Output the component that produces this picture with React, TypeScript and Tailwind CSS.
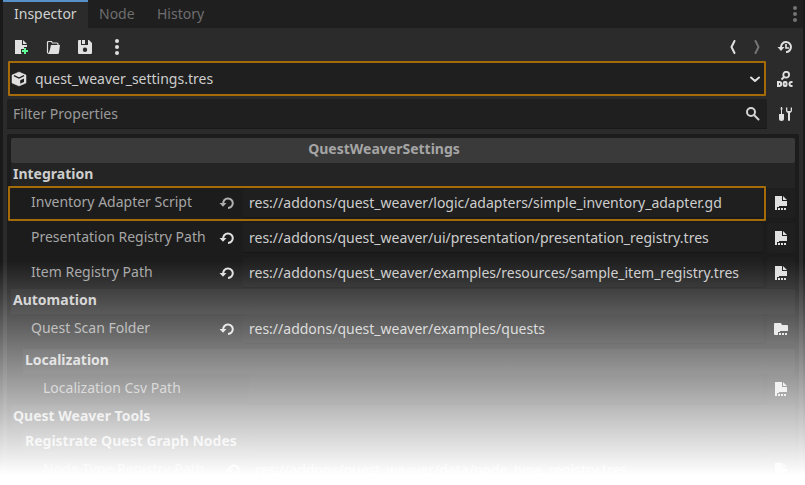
import type { ReactNode } from "react";

function Icon({ children, className = "" }: { children: ReactNode; className?: string }) {
  return (
    <svg width="16" height="16" viewBox="0 0 16 16" fill="none" className={`block shrink-0 ${className}`}>
      {children}
    </svg>
  );
}

const LIGHT = "#e0e0e0";

const NewIcon = () => (
  <Icon>
    <path d="M2 1h7v5h5v2h-3v2H8v4l1 1H2z" fill={LIGHT} />
    <path d="M10 1v4h4z" fill={LIGHT} />
    <path d="M11 9h2v2h2v2h-2v2h-2v-2H9v-2h2z" fill="#5fff97" />
  </Icon>
);
const OpenIcon = () => (
  <Icon>
    <path d="M2.500 14V3.500q0-1 1-1H6.500l1 1.500h4.500q1 0 1 1V6" stroke={LIGHT} strokeWidth="1.200" />
    <path d="M6 6h9l-1 7.500q-.2 1.500-1.500 1.500H2q1.800-.5 2.500-3z" fill={LIGHT} />
  </Icon>
);
const SaveIcon = () => (
  <Icon>
    <path fillRule="evenodd" d="M2 1h2v5h7V1h1l3 3v10q0 1-1 1H2q-1 0-1-1V2q0-1 1-1zm6 7.500a2.200 2.200 0 1 0 0 4.400 2.200 2.200 0 0 0 0-4.400z" fill={LIGHT} />
    <path d="M5 1h3v4H5z" fill={LIGHT} />
  </Icon>
);
const Dots = ({ color }: { color: string }) => (
  <Icon>
    <g fill={color}>
      <circle cx="8" cy="2" r="2" />
      <circle cx="8" cy="8" r="2" />
      <circle cx="8" cy="14" r="2" />
    </g>
  </Icon>
);
const BackIcon = () => (
  <Icon><path d="M9.500 2 6.500 8l3 6" stroke={LIGHT} strokeWidth="2" strokeLinecap="round" strokeLinejoin="round" /></Icon>
);
const ForwardIcon = () => (
  <Icon><path d="m6.500 2 3 6-3 6" stroke="#747474" strokeWidth="2" strokeLinecap="round" strokeLinejoin="round" /></Icon>
);
const HistoryIcon = () => (
  <Icon>
    <path d="M4 8.500A5 5 0 1 1 9 13" stroke={LIGHT} strokeWidth="2" />
    <path d="M.5 8h7L4 12z" fill={LIGHT} />
    <path d="M9 5v4h3" stroke={LIGHT} strokeWidth="1.700" />
  </Icon>
);
const DocIcon = () => (
  <Icon>
    <circle cx="9.200" cy="3.700" r="2.900" stroke={LIGHT} strokeWidth="1.800" />
    <path d="M7 6 4.500 8.500" stroke={LIGHT} strokeWidth="2" />
    <path d="M1 11h1.200q2 0 2 2t-2 2H1z" stroke={LIGHT} strokeWidth="2" />
    <rect x="6.700" y="11" width="2.800" height="4" rx="1" stroke={LIGHT} strokeWidth="2" />
    <path d="M15.500 11h-1q-2 0-2 2t2 2h1" stroke={LIGHT} strokeWidth="2" />
  </Icon>
);
const ToolsIcon = () => (
  <Icon>
    <path d="M4 1h1l.5 2L5 4v4h2v4.500a2.500 2.500 0 0 1-5 0V8h2V4l-.5-1z" fill={LIGHT} />
    <path d="M9 1.500v3q0 1.500 2 2.500v7q0 1 1 1t1-1V7q2-1 2-2.500v-3h-1.300V5h-3.400V1.500z" fill={LIGHT} />
  </Icon>
);
const CubeIcon = () => (
  <Icon>
    <path d="m8 1 7 3v8l-7 3-7-3V4z" fill={LIGHT} stroke={LIGHT} strokeWidth=".5" strokeLinejoin="round" />
    <path d="M3 4.700 8 7l5-2.300" stroke="#1f1f1f" strokeWidth="1.300" />
    <path d="m9.200 9.300 3.800-1.800v3.600l-3.800 1.700z" fill="#1f1f1f" />
  </Icon>
);
const ChevronIcon = () => (
  <Icon><path d="m4 6.500 4 3.500 4-3.500" stroke={LIGHT} strokeWidth="2" strokeLinecap="round" strokeLinejoin="round" /></Icon>
);
const SearchIcon = () => (
  <Icon>
    <circle cx="6" cy="6" r="4" stroke="#d4d4d4" strokeWidth="2" />
    <path d="m9 9 4.500 4.500" stroke="#d4d4d4" strokeWidth="2" strokeLinecap="round" />
  </Icon>
);
const RevertIcon = ({ dim = false }: { dim?: boolean }) => (
  <Icon>
    <path d="M4.200 8.500A4.800 4.800 0 1 1 9 13" stroke={dim ? "#b0b0b0" : LIGHT} strokeWidth="2" />
    <path d="M.5 8h7L4 11.800z" fill={dim ? "#b0b0b0" : LIGHT} />
  </Icon>
);
const FileIcon = () => (
  <Icon>
    <path d="M2 1h7v5h5v5H6v1H4v3H2z" fill={LIGHT} />
    <path d="M10 1v4h4z" fill={LIGHT} />
    <path d="M5 13h2v2H5zM8 13h2v2H8zM11 13h2v2h-2z" fill={LIGHT} />
  </Icon>
);
const FolderIcon = () => (
  <Icon>
    <path d="M1 3q0-1 1-1h6l1 2h5q1 0 1 1v5H7v1H5v3H2q-1 0-1-1z" fill={LIGHT} />
    <path d="M6 12h2v2H6zM9 12h2v2H9zM12 12h2v2h-2z" fill={LIGHT} />
  </Icon>
);

interface PropertyProps {
  label: string;
  value?: string;
  nested?: boolean;
  folder?: boolean;
  focused?: boolean;
}

function Property({ label, value, nested, folder, focused }: PropertyProps) {
  return (
    <div className="relative flex h-[30px] shrink-0">
      <div className={`flex shrink-0 items-center justify-between pr-2 ${nested ? "w-[238px] pl-8" : "w-[232px] pl-5"}`}>
        <span className="-mt-0.5 text-[#a5a5a5]">{label}</span>
        {value && <RevertIcon dim={focused} />}
      </div>
      <div className={`flex shrink-0 items-center rounded-xs border-b border-[#171717] bg-[#1f1f1f] pl-1.5 text-[#cdcdcd] ${nested ? "w-[514px]" : "w-[520px]"}`}>
        {value}
      </div>
      <div className="ml-1 flex flex-1 items-center justify-center rounded-xs bg-[#1f1f1f]">
        {folder ? <FolderIcon /> : <FileIcon />}
      </div>
      {focused && <div className="pointer-events-none absolute -top-0.5 -left-[3px] h-[35px] w-[758px] rounded-[1px] border-2 border-[#a46b08]" />}
    </div>
  );
}

function Section({ title, nested }: { title: string; nested?: boolean }) {
  return (
    <div className={`flex h-[25px] shrink-0 items-center bg-[#242424] pb-1 font-bold text-[#cdcdcd] ${nested ? "ml-3 pl-0.5" : "pl-0.5"}`}>
      {title}
    </div>
  );
}

export default function App() {
  return (
    <main className="relative h-[485px] w-[805px] overflow-hidden bg-[#191919] pr-0.5 pl-[3px] font-['Noto_Sans',sans-serif] text-[14px] leading-5 whitespace-nowrap">
      <div className="flex h-full flex-col bg-[#2b2b2b]">
        <nav className="flex h-7 shrink-0 bg-[#1f1f1f] text-[#6e6e6e]">
          <div className="w-[85px] border-t-2 border-[#5790c6] bg-[#2b2b2b] pt-0.5 pl-[11px] text-[#d0d0d0]">Inspector</div>
          <div className="w-[58px] pt-1 pl-[11px]">Node</div>
          <div className="flex-1 pt-1 pl-[11px]">History</div>
          <div className="pt-1.5"><Dots color="#747474" /></div>
        </nav>
        <div className="flex h-[33px] shrink-0 items-center pt-1 pr-2.5 pl-[10px]">
          <div className="flex flex-1 gap-4"><NewIcon /><OpenIcon /><SaveIcon /><Dots color={LIGHT} /></div>
          <div className="flex"><BackIcon /><div className="ml-2"><ForwardIcon /></div><div className="ml-3"><HistoryIcon /></div></div>
        </div>
        <div className="flex h-[35px] shrink-0 items-center pl-[5px]">
          <div className="flex h-full w-[758px] items-center rounded-[1px] border-2 border-[#a46b08] bg-[#1f1f1f] pl-[1px] text-[#cdcdcd]">
            <CubeIcon /><span className="ml-2 flex-1">quest_weaver_settings.tres</span><ChevronIcon /><span className="w-[1px]" />
          </div>
          <div className="ml-[11px]"><DocIcon /></div>
        </div>
        <div className="mt-[3px] flex h-[30px] shrink-0 items-center pl-1">
          <div className="flex h-full w-[760px] items-center rounded-t-xs border-b border-[#191919] bg-[#1f1f1f] pt-px pr-1.5 pl-1.5 text-[#9a9a9a]">
            <span className="flex-1">Filter Properties</span><SearchIcon />
          </div>
          <div className="ml-[10px]"><ToolsIcon /></div>
        </div>
        <div className="mt-[5px] mr-1 ml-1 flex min-h-0 flex-1 flex-col rounded-t-xs bg-[#1c1c1c] px-1 pt-1">
          <h1 className="flex h-[25px] shrink-0 items-center justify-center rounded-xs bg-[#3a3a3a] pr-[38px] pb-1 font-bold text-[#a5a5a5]">QuestWeaverSettings</h1>
          <Section title="Integration" />
          <div className="flex flex-col gap-[5px]">
            <Property label="Inventory Adapter Script" value="res://addons/quest_weaver/logic/adapters/simple_inventory_adapter.gd" focused />
            <Property label="Presentation Registry Path" value="res://addons/quest_weaver/ui/presentation/presentation_registry.tres" />
            <Property label="Item Registry Path" value="res://addons/quest_weaver/examples/resources/sample_item_registry.tres" />
          </div>
          <div className="mt-[1px]"><Section title="Automation" /></div>
          <Property label="Quest Scan Folder" value="res://addons/quest_weaver/examples/quests" folder />
          <div className="mt-[5px]"><Section title="Localization" nested /></div>
          <Property label="Localization Csv Path" nested />
          <div className="mt-[1px]"><Section title="Quest Weaver Tools" /></div>
          <Section title="Registrate Quest Graph Nodes" nested />
          <Property label="Node Type Registry Path" value="res://addons/quest_weaver/data/node_type_registry.tres" nested />
        </div>
      </div>
      <div className="pointer-events-none absolute inset-x-0 top-[261px] bottom-0 bg-linear-to-b from-white/0 to-white to-[214px]" />
    </main>
  );
}
